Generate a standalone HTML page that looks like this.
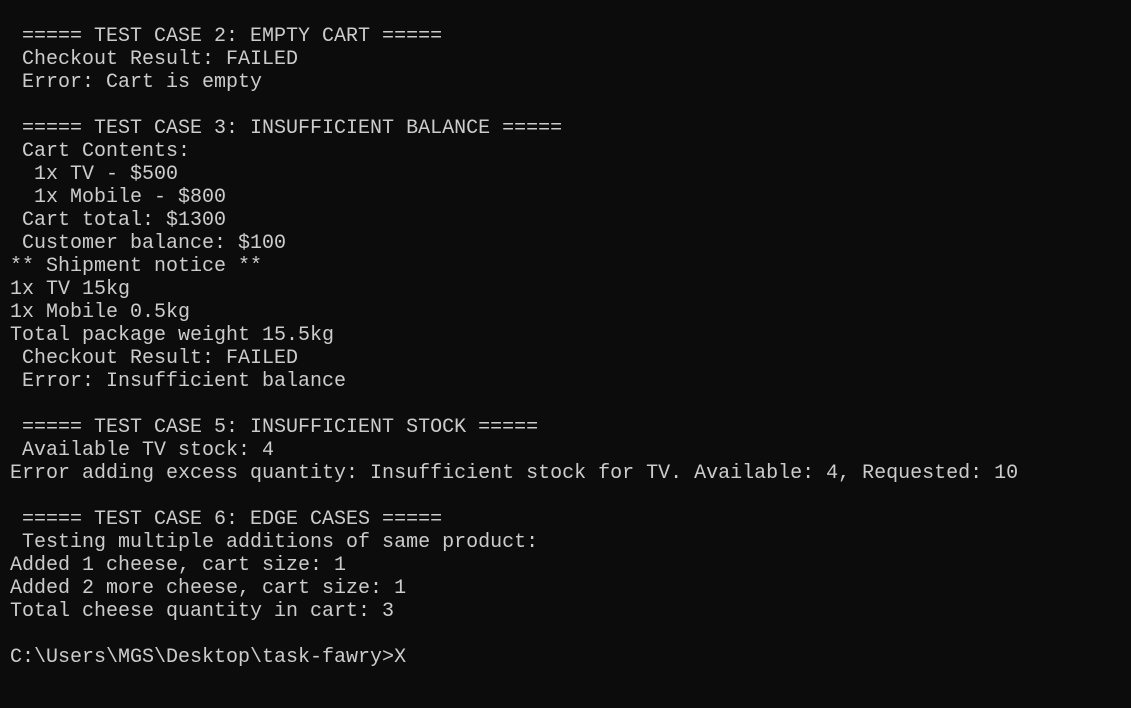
<!DOCTYPE html>
<html><head><meta charset="utf-8"><style>
html,body{margin:0;padding:0;background:#0c0c0c;width:1131px;height:708px;overflow:hidden}
pre{margin:0;position:absolute;left:10px;top:25px;font-family:"Liberation Mono","DejaVu Sans Mono",monospace;font-size:20px;line-height:23px;color:#cccccc;white-space:pre}
</style></head><body><pre> ===== TEST CASE 2: EMPTY CART =====
 Checkout Result: FAILED
 Error: Cart is empty

 ===== TEST CASE 3: INSUFFICIENT BALANCE =====
 Cart Contents:
  1x TV - $500
  1x Mobile - $800
 Cart total: $1300
 Customer balance: $100
** Shipment notice **
1x TV 15kg
1x Mobile 0.5kg
Total package weight 15.5kg
 Checkout Result: FAILED
 Error: Insufficient balance

 ===== TEST CASE 5: INSUFFICIENT STOCK =====
 Available TV stock: 4
Error adding excess quantity: Insufficient stock for TV. Available: 4, Requested: 10

 ===== TEST CASE 6: EDGE CASES =====
 Testing multiple additions of same product:
Added 1 cheese, cart size: 1
Added 2 more cheese, cart size: 1
Total cheese quantity in cart: 3

C:\Users\MGS\Desktop\task-fawry>X</pre></body></html>
